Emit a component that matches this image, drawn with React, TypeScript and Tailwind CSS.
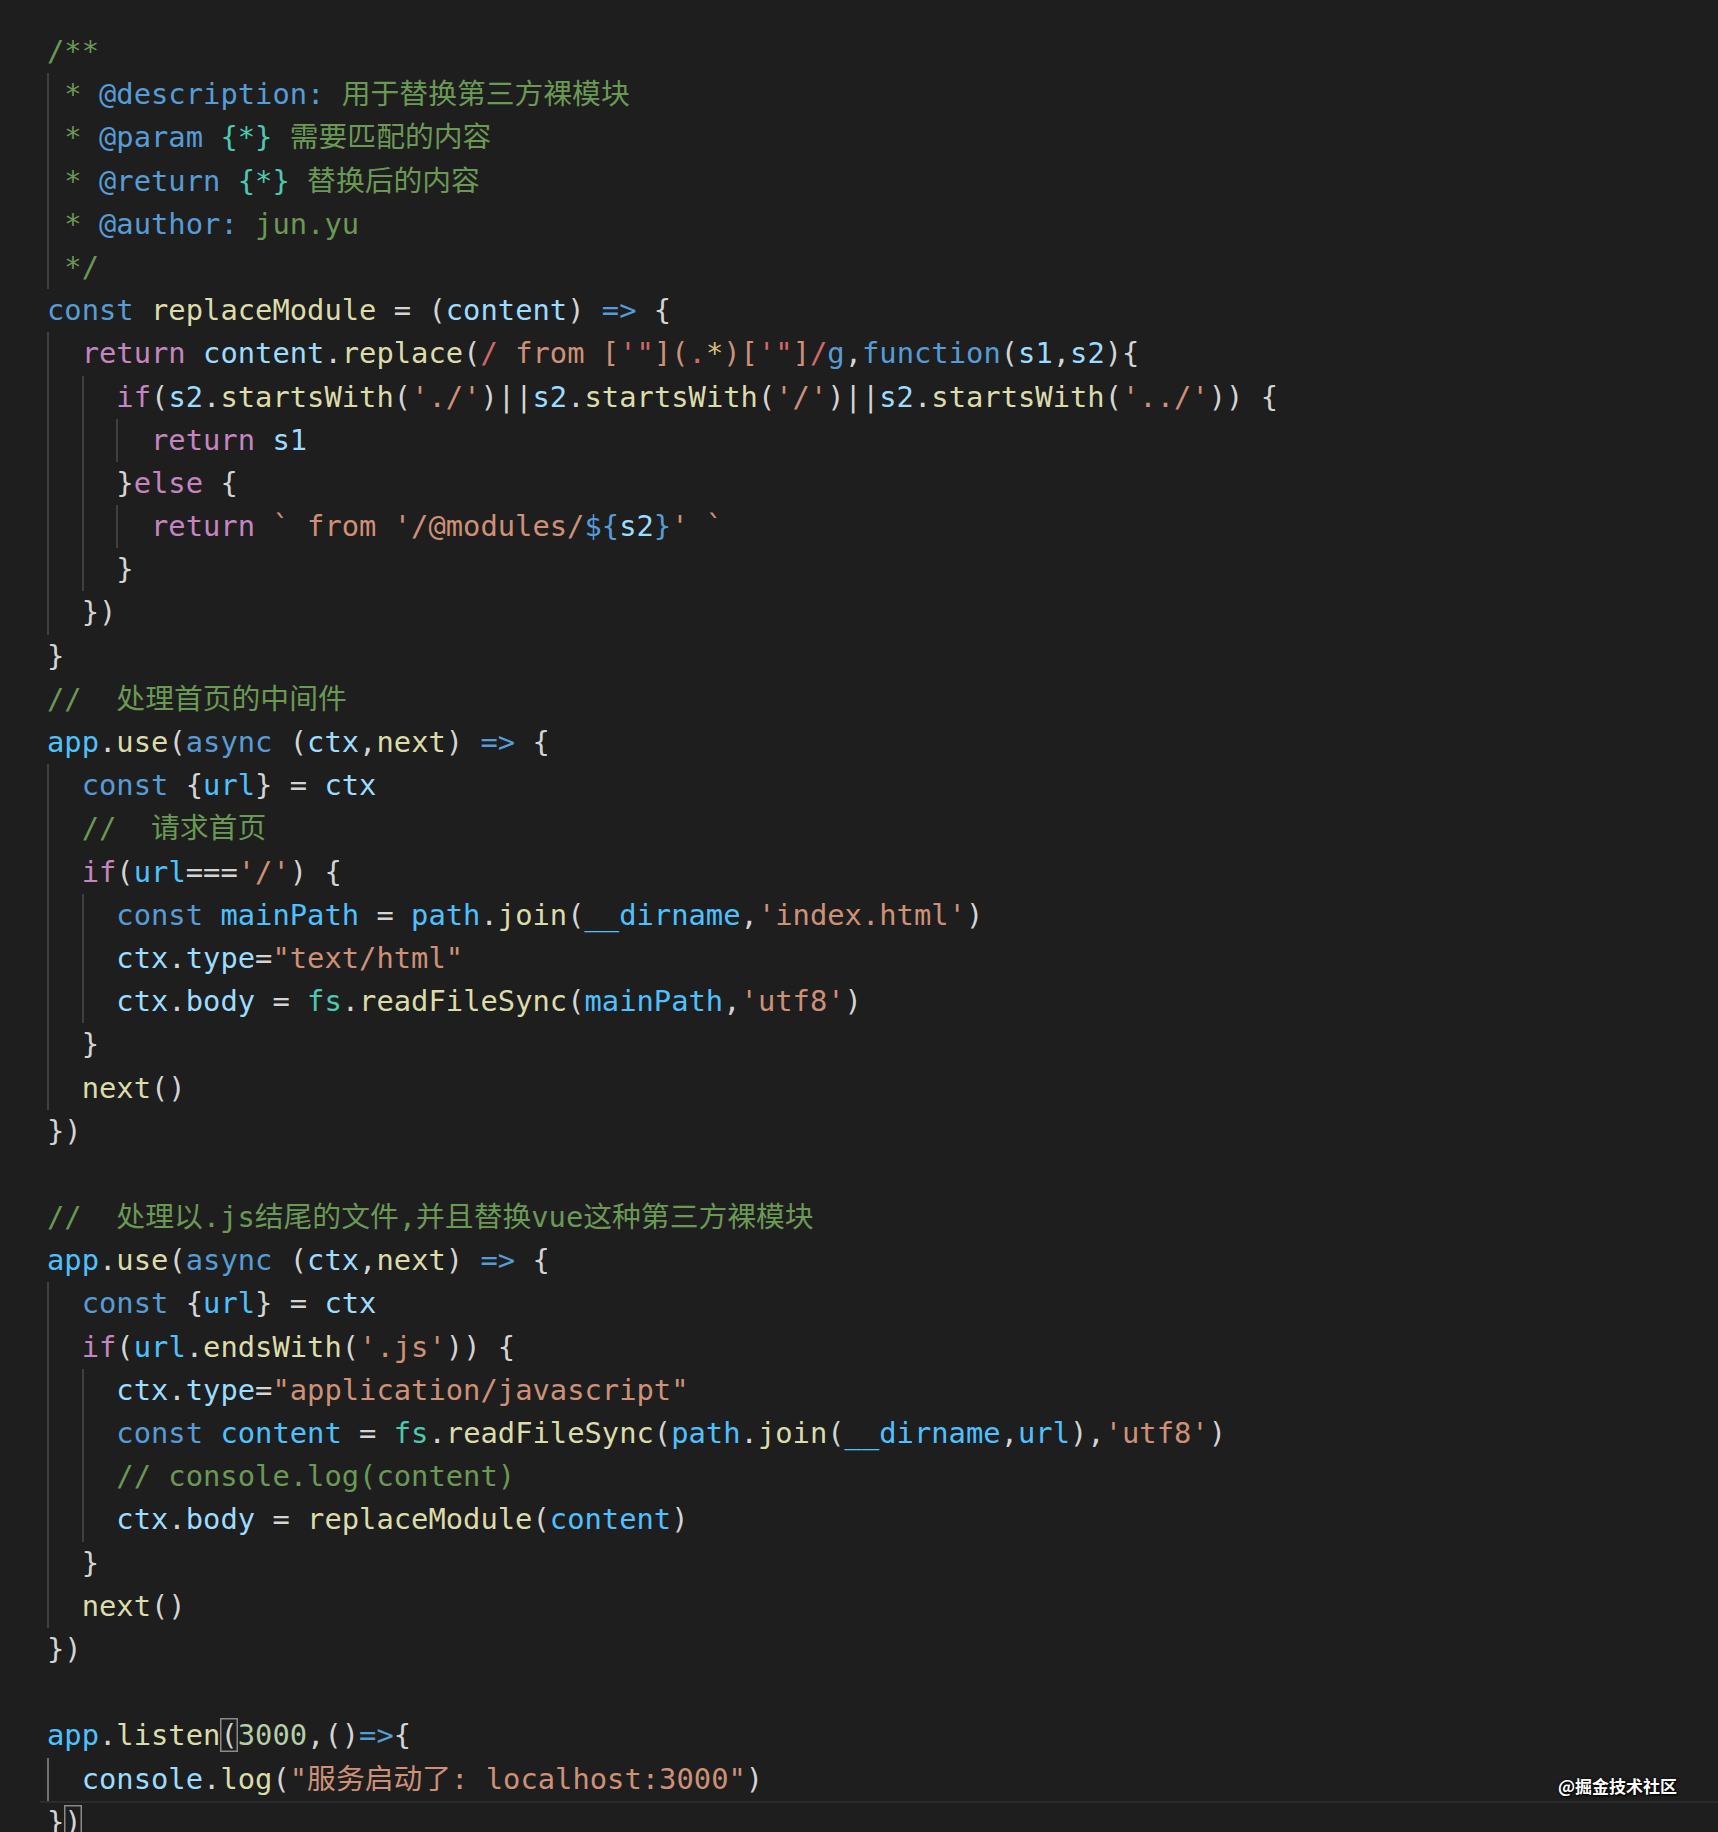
import React from 'react';

type Tok = [string, string];

interface Line {
  lv?: number; // indent levels (2 columns each)
  doc?: boolean; // 1-space jsdoc indent
  active?: boolean; // active indent guide
  current?: boolean; // cursor line
  toks: Tok[];
}

// token colours, VS Code Dark+
const C: Record<string, string> = {
  c: 'text-[#6a9955]',
  k: 'text-[#569cd6]',
  x: 'text-[#c586c0]',
  f: 'text-[#dcdcaa]',
  v: 'text-[#9cdcfe]',
  b: 'text-[#4fc1ff]',
  s: 'text-[#ce9178]',
  r: 'text-[#d16969]',
  q: 'text-[#d7ba7d]',
  n: 'text-[#b5cea8]',
  t: 'text-[#4ec9b0]',
  p: 'text-[#d4d4d4]',
  m: 'text-[#d4d4d4] shadow-[inset_0_0_0_1.5px_#8a8a8a]',
};

const useLine: Tok[] = [
  ['app', 'b'], ['.', 'p'], ['use', 'f'], ['(', 'p'], ['async', 'k'], [' (', 'p'],
  ['ctx', 'v'], [',', 'p'], ['next', 'f'], [') ', 'p'], ['=>', 'k'], [' {', 'p'],
];

const urlLine: Tok[] = [['const', 'k'], [' {', 'p'], ['url', 'b'], ['} = ', 'p'], ['ctx', 'v']];

const lines: Line[] = [
  { toks: [['/**', 'c']] },
  { doc: true, toks: [['* ', 'c'], ['@description:', 'k'], [' 用于替换第三方裸模块', 'c']] },
  { doc: true, toks: [['* ', 'c'], ['@param', 'k'], [' ', 'p'], ['{*}', 't'], [' 需要匹配的内容', 'c']] },
  { doc: true, toks: [['* ', 'c'], ['@return', 'k'], [' ', 'p'], ['{*}', 't'], [' 替换后的内容', 'c']] },
  { doc: true, toks: [['* ', 'c'], ['@author:', 'k'], [' jun.yu', 'c']] },
  { doc: true, toks: [['*/', 'c']] },
  {
    toks: [
      ['const', 'k'], [' ', 'p'], ['replaceModule', 'f'], [' = (', 'p'], ['content', 'v'],
      [') ', 'p'], ['=>', 'k'], [' {', 'p'],
    ],
  },
  {
    lv: 1,
    toks: [
      ['return', 'x'], [' ', 'p'], ['content', 'v'], ['.', 'p'], ['replace', 'f'], ['(', 'p'],
      ['/', 'r'], [' from ', 's'], ['[', 's'], ['\'"', 'r'], [']', 's'], ['(', 's'], ['.', 'r'],
      ['*', 'q'], [')', 's'], ['[', 's'], ['\'"', 'r'], [']', 's'], ['/', 'r'], ['g', 'k'],
      [',', 'p'], ['function', 'k'], ['(', 'p'], ['s1', 'v'], [',', 'p'], ['s2', 'v'], ['){', 'p'],
    ],
  },
  {
    lv: 2,
    toks: [
      ['if', 'x'], ['(', 'p'], ['s2', 'v'], ['.', 'p'], ['startsWith', 'f'], ['(', 'p'], ["'./'", 's'],
      [')||', 'p'], ['s2', 'v'], ['.', 'p'], ['startsWith', 'f'], ['(', 'p'], ["'/'", 's'],
      [')||', 'p'], ['s2', 'v'], ['.', 'p'], ['startsWith', 'f'], ['(', 'p'], ["'../'", 's'],
      [')) {', 'p'],
    ],
  },
  { lv: 3, toks: [['return', 'x'], [' ', 'p'], ['s1', 'v']] },
  { lv: 2, toks: [['}', 'p'], ['else', 'x'], [' {', 'p']] },
  {
    lv: 3,
    toks: [
      ['return', 'x'], [' ', 'p'], ["` from '/@modules/", 's'], ['${', 'k'], ['s2', 'v'],
      ['}', 'k'], ["' `", 's'],
    ],
  },
  { lv: 2, toks: [['}', 'p']] },
  { lv: 1, toks: [['})', 'p']] },
  { toks: [['}', 'p']] },
  { toks: [['//  处理首页的中间件', 'c']] },
  { toks: useLine },
  { lv: 1, toks: urlLine },
  { lv: 1, toks: [['//  请求首页', 'c']] },
  { lv: 1, toks: [['if', 'x'], ['(', 'p'], ['url', 'b'], ['===', 'p'], ["'/'", 's'], [') {', 'p']] },
  {
    lv: 2,
    toks: [
      ['const', 'k'], [' ', 'p'], ['mainPath', 'b'], [' = ', 'p'], ['path', 'b'], ['.', 'p'],
      ['join', 'f'], ['(', 'p'], ['__dirname', 'b'], [',', 'p'], ["'index.html'", 's'], [')', 'p'],
    ],
  },
  { lv: 2, toks: [['ctx', 'v'], ['.', 'p'], ['type', 'v'], ['=', 'p'], ['"text/html"', 's']] },
  {
    lv: 2,
    toks: [
      ['ctx', 'v'], ['.', 'p'], ['body', 'v'], [' = ', 'p'], ['fs', 't'], ['.', 'p'],
      ['readFileSync', 'f'], ['(', 'p'], ['mainPath', 'b'], [',', 'p'], ["'utf8'", 's'], [')', 'p'],
    ],
  },
  { lv: 1, toks: [['}', 'p']] },
  { lv: 1, toks: [['next', 'f'], ['()', 'p']] },
  { toks: [['})', 'p']] },
  { toks: [] },
  { toks: [['//  处理以.js结尾的文件,并且替换vue这种第三方裸模块', 'c']] },
  { toks: useLine },
  { lv: 1, toks: urlLine },
  {
    lv: 1,
    toks: [
      ['if', 'x'], ['(', 'p'], ['url', 'b'], ['.', 'p'], ['endsWith', 'f'], ['(', 'p'],
      ["'.js'", 's'], [')) {', 'p'],
    ],
  },
  { lv: 2, toks: [['ctx', 'v'], ['.', 'p'], ['type', 'v'], ['=', 'p'], ['"application/javascript"', 's']] },
  {
    lv: 2,
    toks: [
      ['const', 'k'], [' ', 'p'], ['content', 'b'], [' = ', 'p'], ['fs', 't'], ['.', 'p'],
      ['readFileSync', 'f'], ['(', 'p'], ['path', 'b'], ['.', 'p'], ['join', 'f'], ['(', 'p'],
      ['__dirname', 'b'], [',', 'p'], ['url', 'b'], ['),', 'p'], ["'utf8'", 's'], [')', 'p'],
    ],
  },
  { lv: 2, toks: [['// console.log(content)', 'c']] },
  {
    lv: 2,
    toks: [
      ['ctx', 'v'], ['.', 'p'], ['body', 'v'], [' = ', 'p'], ['replaceModule', 'f'], ['(', 'p'],
      ['content', 'b'], [')', 'p'],
    ],
  },
  { lv: 1, toks: [['}', 'p']] },
  { lv: 1, toks: [['next', 'f'], ['()', 'p']] },
  { toks: [['})', 'p']] },
  { toks: [] },
  {
    toks: [
      ['app', 'b'], ['.', 'p'], ['listen', 'f'], ['(', 'm'], ['3000', 'n'], [',()', 'p'],
      ['=>', 'k'], ['{', 'p'],
    ],
  },
  {
    lv: 1,
    active: true,
    toks: [
      ['console', 'v'], ['.', 'p'], ['log', 'f'], ['(', 'p'], ['"服务启动了: localhost:3000"', 's'], [')', 'p'],
    ],
  },
  { current: true, toks: [['}', 'p'], [')', 'm']] },
];

const CodeLine = ({ line }: { line: Line }) => {
  const guides = Array.from({ length: line.lv ?? 0 });
  return (
    <div
      className={`flex h-[43.2px] pl-[7px] leading-[43.2px] whitespace-pre ${
        line.current ? 'shadow-[inset_0_2px_0_#2b2b2b]' : ''
      }`}
    >
      {line.doc && <span className="w-[1ch] shrink-0 border-l-2 border-[#404040]" />}
      {guides.map((_, i) => (
        <span
          key={i}
          className={`w-[2ch] shrink-0 border-l-2 ${
            line.active ? 'border-[#707070]' : 'border-[#404040]'
          }`}
        />
      ))}
      <span>
        {line.toks.map(([text, key], i) => (
          <span key={i} className={C[key]}>
            {text}
          </span>
        ))}
      </span>
    </div>
  );
};

export default function App() {
  return (
    <div className="relative h-[1832px] w-full overflow-hidden bg-[#1e1e1e] pt-[30px] font-['DejaVu_Sans_Mono','Noto_Sans_CJK_SC',monospace] text-[28.8px]">
      <div className="ml-[40px]">
        {lines.map((line, i) => (
          <CodeLine key={i} line={line} />
        ))}
      </div>

      {/* watermark */}
      <div className="absolute right-[41px] top-[1774px] font-['Noto_Sans_CJK_SC',sans-serif] text-[17px] leading-[24px] font-bold text-white [text-shadow:1px_1px_2px_#000,0_0_3px_#000]">
        @掘金技术社区
      </div>
    </div>
  );
}
